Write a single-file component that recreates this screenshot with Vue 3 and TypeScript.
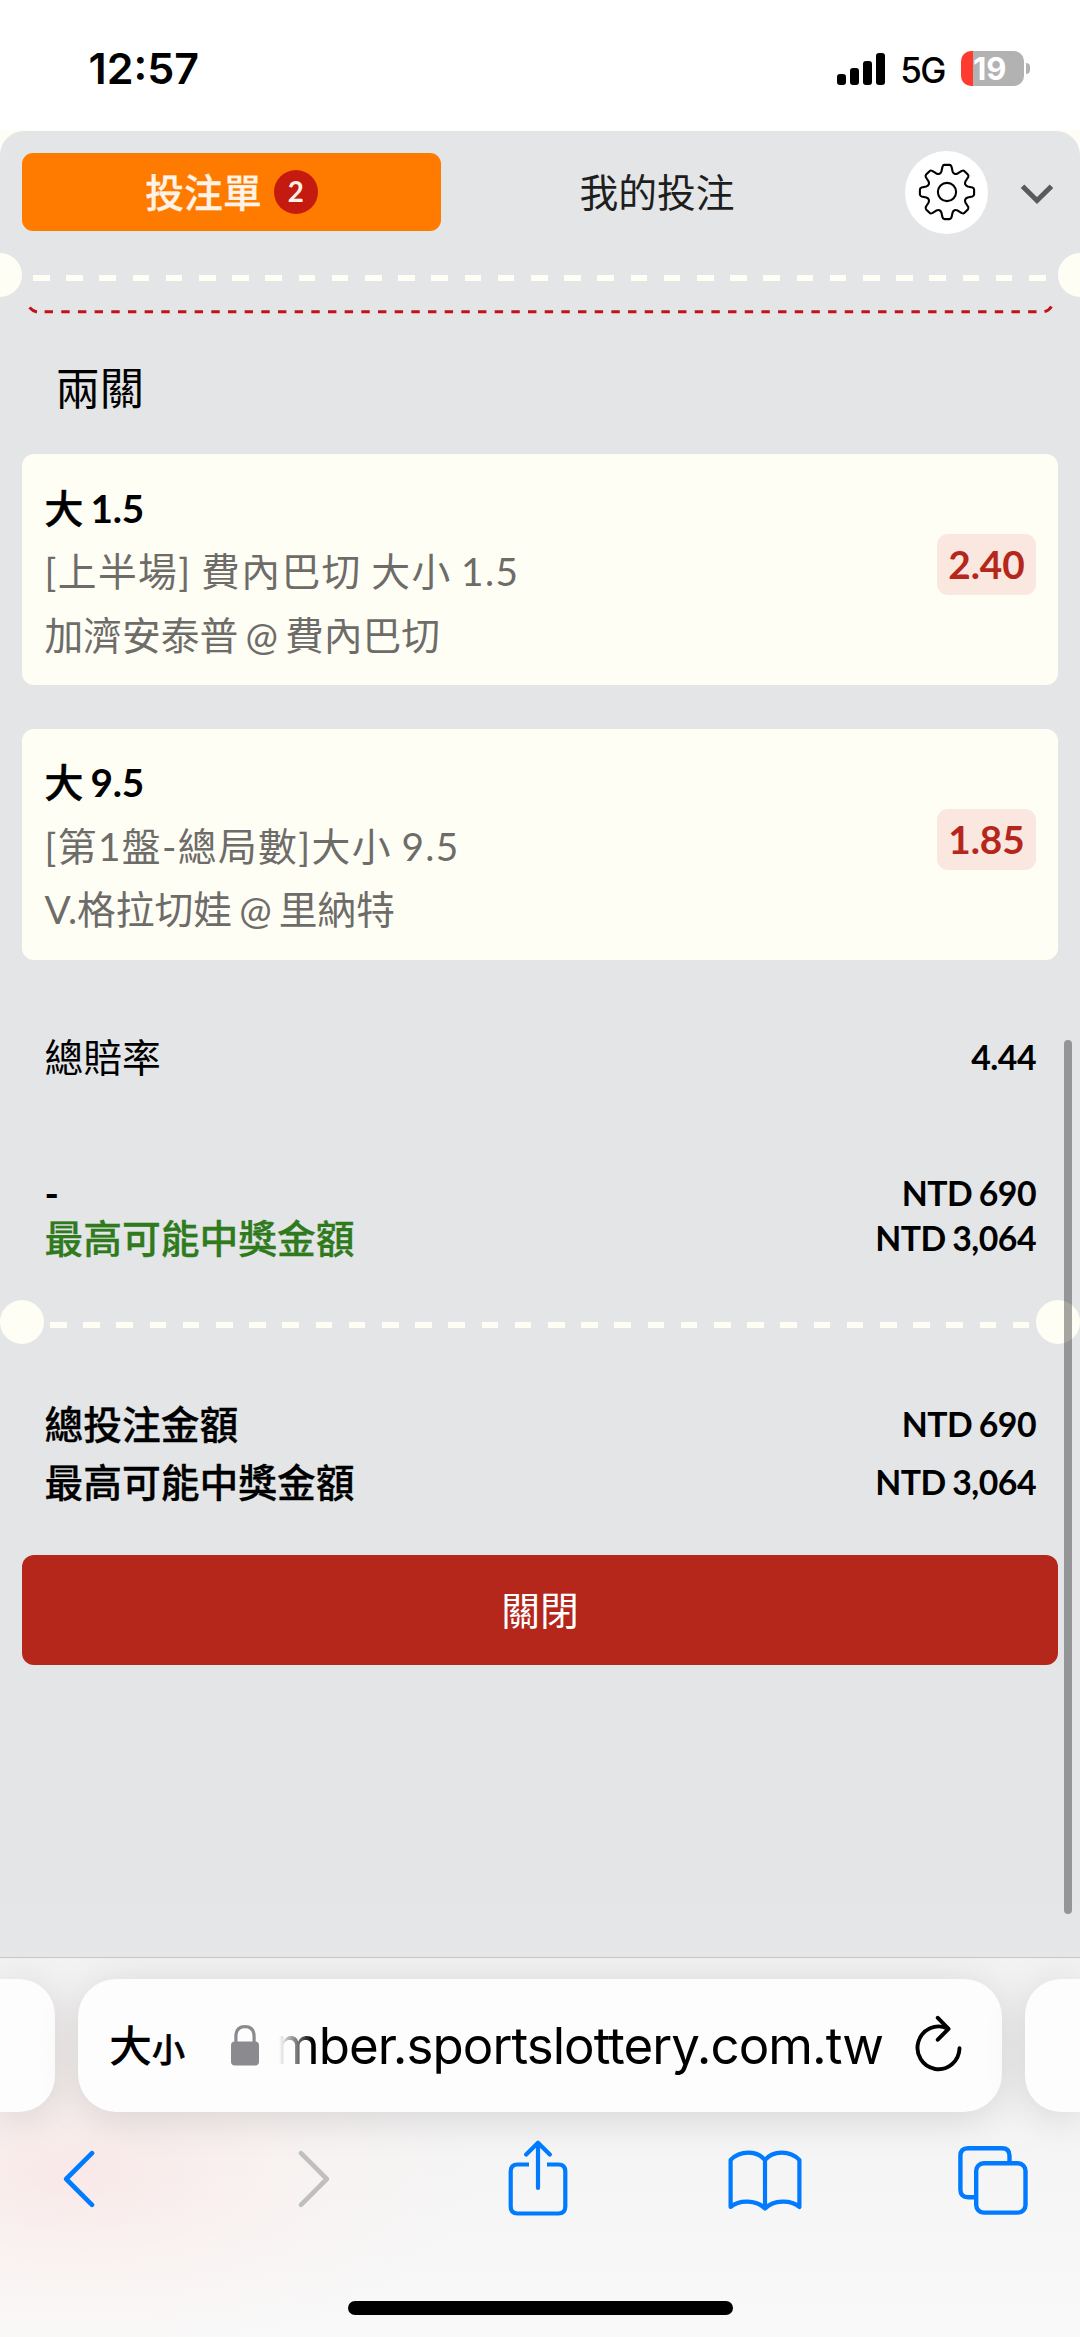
<script setup lang="ts">
interface Selection {
  side: string
  line: string
  market: string
  teams: string
  odds: string
}

const selections: Selection[] = [
  { side: '大', line: '1.5', market: '[上半場] 費內巴切 大小 1.5', teams: '加濟安泰普 @ 費內巴切', odds: '2.40' },
  { side: '大', line: '9.5', market: '[第1盤-總局數]大小 9.5', teams: 'V.格拉切娃 @ 里納特', odds: '1.85' },
]

// Outline of an eight-toothed gear centred on the origin
function gearPath(): string {
  const pt = (r: number, deg: number): string => {
    const a = (deg * Math.PI) / 180
    return `${(r * Math.sin(a)).toFixed(2)} ${(-r * Math.cos(a)).toFixed(2)}`
  }
  let d = `M${pt(27.2, -7.5)}`
  for (let k = 0; k < 8; k++) {
    const c = k * 45
    d += `Q${pt(27.2, c - 6)} ${pt(27.2, c - 5)}L${pt(27.2, c + 5)}Q${pt(27.4, c + 8)} ${pt(25.8, c + 10)}`
    d += `L${pt(21.4, c + 15)}Q${pt(18.2, c + 22.5)} ${pt(21.4, c + 30)}L${pt(25.8, c + 35)}Q${pt(27.4, c + 37)} ${pt(27.2, c + 40)}`
  }
  return d + 'Z'
}
const gear = gearPath()
</script>

<template>
  <div class="screen">
    <header class="status">
      <span class="clock">12:57</span>
      <div class="status-right">
        <div class="signal"><i class="b1" /><i class="b2" /><i class="b3" /><i class="b4" /></div>
        <span class="net">5G</span>
        <div class="battery"><span class="level">19</span></div>
        <i class="nub" />
      </div>
    </header>

    <main class="page">
      <section class="panel">
        <nav class="tabs">
          <div class="tab active"><span>投注單</span><b class="count">2</b></div>
          <div class="tab"><span>我的投注</span></div>
          <button class="settings" type="button">
            <svg width="60" height="60" viewBox="-30 -30 60 60" fill="none" stroke="#000" stroke-width="2.1" stroke-linejoin="round">
              <path :d="gear" />
              <circle r="9.1" />
            </svg>
          </button>
          <svg class="collapse" width="34" height="22" viewBox="0 0 34 22" fill="none" stroke="#5a5a5a" stroke-width="5">
            <path d="M2.5 3.2 17 17.6 31.5 3.2" />
          </svg>
        </nav>

        <div class="tear edge"><i class="hole" /><i class="dashes" /><i class="hole" /></div>

        <svg class="coupon-end" width="1080" height="20" viewBox="0 0 1080 20" fill="none" stroke="#c1121a" stroke-width="2.9">
          <path d="M29.5 10.5Q32.5 14 37 15" />
          <path d="M44.6 14.7H1038" stroke-dasharray="8.4 8.27" />
          <path d="M1044.5 14.6Q1049 13.5 1051.5 9.5" />
        </svg>

        <h2 class="group">兩關</h2>

        <article v-for="s in selections" :key="s.odds" class="card">
          <div class="lines">
            <div class="pick"><span class="side">{{ s.side }}</span> {{ s.line }}</div>
            <span class="market">{{ s.market }}</span>
            <span>{{ s.teams }}</span>
          </div>
          <b class="odds">{{ s.odds }}</b>
        </article>

        <dl class="row total-odds"><dt>總賠率</dt><dd>4.44</dd></dl>
        <dl class="row stake"><dt>-</dt><dd>NTD 690</dd></dl>
        <dl class="row win"><dt>最高可能中獎金額</dt><dd>NTD 3,064</dd></dl>

        <div class="tear"><i class="hole" /><i class="dashes" /><i class="hole" /></div>

        <dl class="row sum first"><dt>總投注金額</dt><dd>NTD 690</dd></dl>
        <dl class="row sum"><dt>最高可能中獎金額</dt><dd>NTD 3,064</dd></dl>

        <button class="close" type="button">關閉</button>
        <i class="scrollbar" />
      </section>
    </main>

    <footer class="browser">
      <div class="pills">
        <div class="pill prev" />
        <div class="pill address">
          <div class="aa"><span class="big">大</span><span class="small">小</span></div>
          <svg class="lock" width="28" height="41" viewBox="0 0 28 41">
            <path d="M4.9 18V11.5Q4.9 1.6 14 1.6T23.1 11.5V18" fill="none" stroke="#8a8a8f" stroke-width="3.2" />
            <rect x="0" y="16.5" width="28" height="24" rx="4" fill="#8a8a8f" />
          </svg>
          <div class="url">mber.sportslottery.com.tw</div>
          <svg class="reload" width="50" height="60" viewBox="0 0 50 60" fill="none" stroke="#000" stroke-width="4" stroke-linecap="round" stroke-linejoin="round">
            <path d="M45.5 34.3A21 21.4 0 1 1 33.5 14.5" stroke-width="3.9" />
            <path d="M23.8 3.8 34.5 14.8 23.8 25.7" />
          </svg>
        </div>
        <div class="pill next" />
      </div>
      <div class="tools">
        <svg width="32" height="58" viewBox="0 0 32 58" fill="none" stroke="#007aff" stroke-width="4.6" stroke-linecap="round" stroke-linejoin="round"><path d="M29 3.2 3.2 29 29 54.8" /></svg>
        <svg class="fwd" width="32" height="58" viewBox="0 0 32 58" fill="none" stroke="#bfbfbf" stroke-width="4.6" stroke-linecap="round" stroke-linejoin="round"><path d="M3 3.2 28.8 29 3 54.8" /></svg>
        <svg class="share" width="60" height="76" viewBox="0 0 60 76" fill="none" stroke="#007aff" stroke-width="4.2" stroke-linecap="round" stroke-linejoin="round">
          <path d="M21 24.5H9.5Q2.7 24.5 2.7 31.5V66.5Q2.7 73.5 9.5 73.5H50.5Q57.3 73.5 57.3 66.5V31.5Q57.3 24.5 50.5 24.5H39" stroke-linecap="butt" />
          <path d="M30 48V3M18.2 14.6 30 2.8 41.8 14.6" />
        </svg>
        <svg class="book" width="74" height="62" viewBox="0 0 74 62" fill="none" stroke="#007aff" stroke-width="4.2" stroke-linecap="round" stroke-linejoin="round">
          <path d="M37 10C29 .2 12 .2 2.6 10V57C11 49.5 28.5 49.5 37 58.5C45.5 49.5 63 49.5 71.4 57V10C62 .2 45 .2 37 10V58" />
        </svg>
        <svg class="pages" width="70" height="69" viewBox="0 0 70 69" fill="none" stroke="#007aff" stroke-width="4.4">
          <path d="M16.5 51.2H10Q2.4 51.2 2.4 43.5V9.8Q2.4 2.3 10 2.3H44Q51.5 2.3 51.5 9.8V16" />
          <rect x="18.2" y="17.3" width="49.3" height="49.3" rx="7.5" />
        </svg>
      </div>
      <i class="home" />
    </footer>
  </div>
</template>

<style>
html,
body {
  margin: 0;
  background: #fff;
}
</style>

<style scoped>
.screen {
  width: 1080px;
  height: 2337px;
  display: flex;
  flex-direction: column;
  overflow: hidden;
  font-family: Lato, 'Noto Sans CJK TC', sans-serif;
  font-size: 38.77px;
  color: #000;
}
i {
  display: block;
  flex: none;
}
button {
  border: 0;
  padding: 0;
  font: inherit;
}
svg {
  display: block;
  flex: none;
}

/* status bar */
.status {
  height: 130px;
  flex: none;
  box-sizing: border-box;
  padding: 7px 50px 0 88.5px;
  display: flex;
  align-items: center;
  justify-content: space-between;
  font-family: Inter, sans-serif;
}
.clock {
  font-size: 43px;
  font-weight: 600;
  line-height: 50px;
  margin-bottom: 1px;
}
.status-right {
  display: flex;
  align-items: center;
}
.signal {
  display: flex;
  align-items: flex-end;
  gap: 4px;
  height: 32px;
  margin-right: 15px;
}
.signal i {
  width: 9px;
  border-radius: 3px;
  background: #000;
}
.b1 { height: 11px; }
.b2 { height: 17px; }
.b3 { height: 24px; }
.b4 { height: 32px; }
.net {
  font-size: 35px;
  font-weight: 500;
  letter-spacing: -1.5px;
  margin: 2px 16px 0 0;
}
.battery {
  width: 63px;
  height: 35px;
  border-radius: 10px;
  background: linear-gradient(90deg, #ff3b30 12px, #b2b2b2 12px);
  color: #fff;
  display: flex;
  align-items: center;
  padding-left: 12px;
  box-sizing: border-box;
}
.level {
  font-size: 31px;
  font-weight: 700;
  line-height: 35px;
}
.nub {
  width: 4px;
  height: 11px;
  margin-left: 2px;
  border-radius: 0 5px 5px 0;
  background: #b2b2b2;
}

/* bet slip */
.page {
  height: 1827px;
  flex: none;
  background: #fffef5;
  padding-top: 1px;
  box-sizing: border-box;
}
.panel {
  position: relative;
  height: 1826px;
  background: linear-gradient(#e4e5e7 1770px, #e6e7e9);
  border-radius: 24px 24px 0 0;
  overflow: hidden;
}
.tabs {
  height: 122px;
  padding-left: 22px;
  display: flex;
  align-items: center;
}
.tab {
  width: 419px;
  height: 78px;
  border-radius: 11px;
  display: flex;
  align-items: center;
  justify-content: center;
  color: #1e1e1e;
  line-height: 75px;
}
.tab + .tab {
  width: 432px;
}
.tab.active {
  background: #ff7b00;
  color: #fff3e8;
  font-weight: 500;
  gap: 12px;
}
.tab.active span {
  -webkit-text-stroke: .3px #fff3e8;
}
.count {
  width: 44px;
  height: 44px;
  border-radius: 50%;
  background: #c41a10;
  font-size: 27.7px;
  line-height: 44px;
  text-align: center;
}
.settings {
  width: 83px;
  height: 83px;
  margin-left: 32px;
  border-radius: 50%;
  background: #fff;
  display: flex;
  align-items: center;
  justify-content: center;
}
.collapse {
  margin: 4px 0 0 32px;
}
.tear {
  height: 45px;
  display: flex;
  align-items: center;
  justify-content: space-between;
}
.tear.edge {
  margin: 0 -22px;
  height: 44px;
}
.hole {
  width: 44.3px;
  height: 44.3px;
  border-radius: 50%;
  background: #fffef5;
}
.dashes {
  width: 980px;
  height: 6px;
  margin-top: 6px;
  background: repeating-linear-gradient(90deg, #fffef5 0 16.6px, transparent 16.6px 33.2px);
}
.edge .dashes {
  width: 1014px;
}
.group {
  margin: 0;
  height: 137px;
  padding: 7px 0 0 55.5px;
  box-sizing: border-box;
  font-size: 44.3px;
  font-weight: 400;
  line-height: 128px;
}
.card {
  height: 230.7px;
  margin: 0 22px 44.3px;
  padding: 22.5px 22px 0 22.5px;
  box-sizing: border-box;
  border-radius: 12px;
  background: #fffef5;
  display: flex;
  justify-content: space-between;
}
.lines {
  display: flex;
  flex-direction: column;
  line-height: 63.5px;
  word-spacing: -2.8px;
  color: #6d6c69;
}
.pick {
  color: #000;
  font-weight: 700;
  word-spacing: -1.5px;
  letter-spacing: -.3px;
}
.side {
  font-weight: 500;
  -webkit-text-stroke: .6px #000;
}
.market {
  letter-spacing: 1.4px;
  word-spacing: -1.8px;
}
.odds {
  width: 99px;
  height: 61px;
  margin-top: 57.5px;
  border-radius: 11px;
  background: #f9e7e0;
  color: #b5261b;
  line-height: 61px;
  text-align: center;
}
.row {
  margin: 0;
  height: 58px;
  padding: 0 44px 0 44.5px;
  display: flex;
  align-items: center;
  justify-content: space-between;
  line-height: 58px;
}
.row dd {
  margin: 0;
  font-size: 33.8px;
  font-weight: 700;
  letter-spacing: -.5px;
  word-spacing: -1.2px;
}
.total-odds {
  margin-top: 68px;
}
.stake {
  margin-top: 85px;
  height: 45px;
  line-height: 45px;
  font-weight: 700;
}
.win {
  height: 45px;
  line-height: 45px;
  font-weight: 500;
  margin-bottom: 39px;
}
.win dt {
  color: #2f7a1c;
  -webkit-text-stroke: .3px #2f7a1c;
}
.sum {
  font-weight: 500;
}
.sum dt {
  -webkit-text-stroke: .3px #000;
}
.sum.first {
  margin-top: 50px;
}
.close {
  display: block;
  width: 1036px;
  height: 110.7px;
  margin: 44px 22px 0;
  border-radius: 12px;
  background: #b5261b;
  color: #fff;
  line-height: 110px;
}
.scrollbar {
  position: absolute;
  left: 1063.5px;
  top: 909px;
  width: 8.5px;
  height: 874px;
  border-radius: 5px;
  background: rgba(0, 0, 0, .35);
}

/* browser chrome */
.browser {
  flex: 1;
  border-top: 1px solid #c6c7c8;
  background:
    radial-gradient(ellipse 400px 190px at 75px 215px, rgba(255, 215, 215, .42), rgba(255, 235, 230, .26) 55%, transparent),
    linear-gradient(#f2f2f2, #f5f5f5 55%, #f9f9f9);
  display: flex;
  flex-direction: column;
}
.pills {
  height: 133px;
  margin-top: 21px;
  display: flex;
  gap: 23px;
}
.pill {
  background: #fdfdfd;
  box-shadow: 0 6px 40px rgba(0, 0, 0, .13);
}
.prev {
  width: 55px;
  border-radius: 0 36px 36px 0;
}
.next {
  width: 55px;
  border-radius: 36px 0 0 36px;
}
.address {
  width: 924px;
  border-radius: 38px;
  box-sizing: border-box;
  padding-left: 31px;
  display: flex;
  align-items: center;
}
.aa {
  width: 122px;
  display: flex;
  align-items: flex-end;
  font-weight: 500;
}
.big {
  font-size: 43px;
  line-height: 50px;
}
.small {
  font-size: 33px;
  line-height: 43px;
  -webkit-text-stroke: .6px #000;
}
.url {
  width: 613px;
  margin-left: 11px;
  display: flex;
  justify-content: flex-end;
  font-family: Inter, sans-serif;
  font-size: 51px;
  letter-spacing: -.95px;
  line-height: 80px;
  white-space: nowrap;
  mask-image: linear-gradient(90deg, transparent 9px, #000 43px);
}
.reload {
  margin: 0 0 4px 31px;
}
.tools {
  height: 76px;
  margin-top: 29px;
  padding-left: 63px;
  display: flex;
  align-items: center;
}
.fwd {
  margin-left: 203px;
}
.share {
  margin: -2px 0 0 178px;
}
.book {
  margin: 3px 0 0 160px;
}
.pages {
  margin: 3px 0 0 156px;
}
.home {
  width: 385px;
  height: 14px;
  margin: 84px 0 0 348px;
  border-radius: 7px;
  background: #000;
}
</style>
